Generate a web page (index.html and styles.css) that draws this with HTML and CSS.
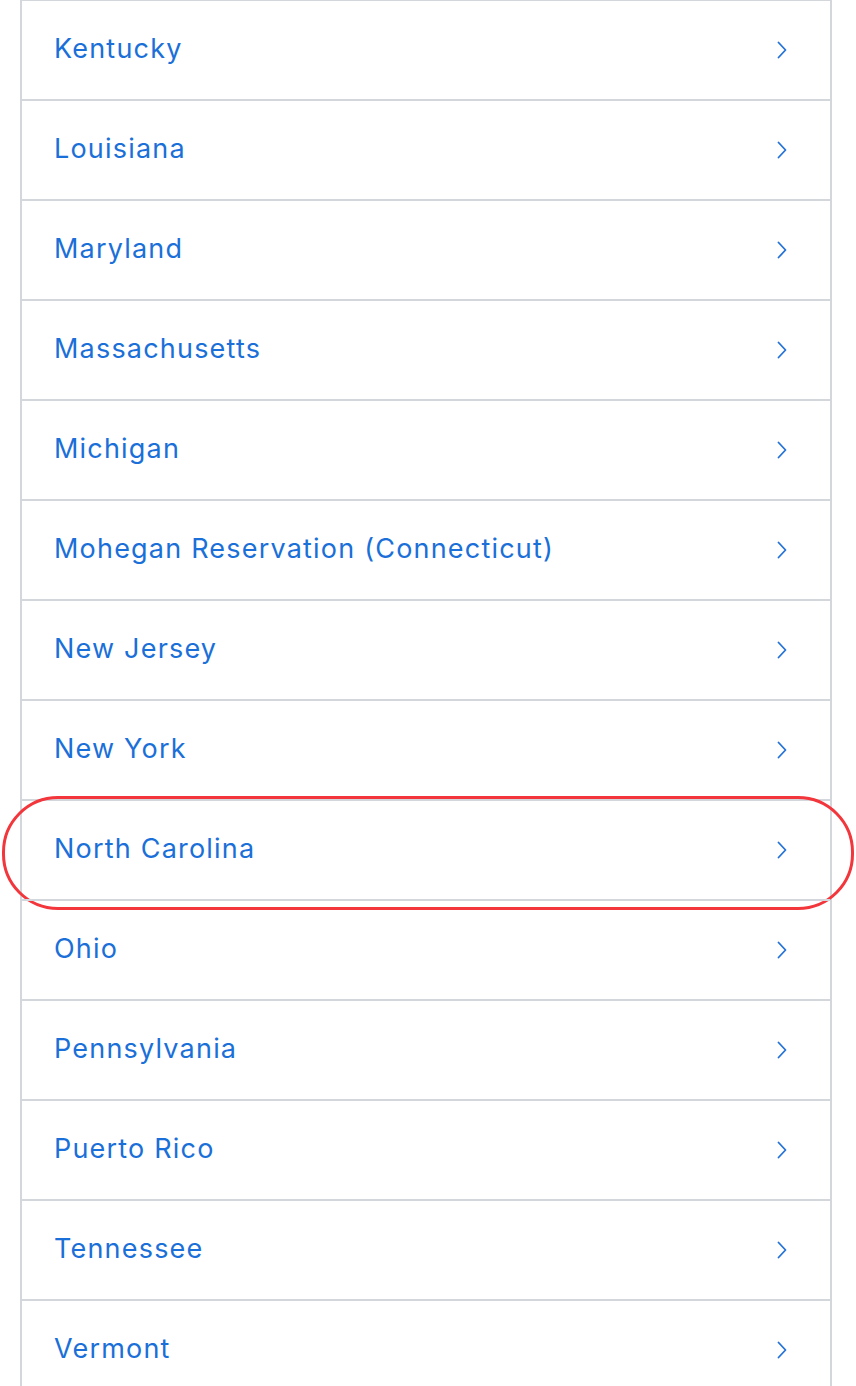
FILE: index.html
```html
<!DOCTYPE html>
<html lang="en">
<head>
<meta charset="utf-8">
<title>States</title>
<link rel="stylesheet" href="styles.css">
</head>
<body>
<div class="page">
  <ul class="list">
    <li class="row"><a class="link" href="#"><span class="name">Kentucky</span><svg class="chev" viewBox="0 0 10 18"><path d="M1.5 1.5 L8.5 9 L1.5 16.5"/></svg></a></li>
    <li class="row"><a class="link" href="#"><span class="name">Louisiana</span><svg class="chev" viewBox="0 0 10 18"><path d="M1.5 1.5 L8.5 9 L1.5 16.5"/></svg></a></li>
    <li class="row"><a class="link" href="#"><span class="name">Maryland</span><svg class="chev" viewBox="0 0 10 18"><path d="M1.5 1.5 L8.5 9 L1.5 16.5"/></svg></a></li>
    <li class="row"><a class="link" href="#"><span class="name">Massachusetts</span><svg class="chev" viewBox="0 0 10 18"><path d="M1.5 1.5 L8.5 9 L1.5 16.5"/></svg></a></li>
    <li class="row"><a class="link" href="#"><span class="name">Michigan</span><svg class="chev" viewBox="0 0 10 18"><path d="M1.5 1.5 L8.5 9 L1.5 16.5"/></svg></a></li>
    <li class="row"><a class="link" href="#"><span class="name">Mohegan Reservation (Connecticut)</span><svg class="chev" viewBox="0 0 10 18"><path d="M1.5 1.5 L8.5 9 L1.5 16.5"/></svg></a></li>
    <li class="row"><a class="link" href="#"><span class="name">New Jersey</span><svg class="chev" viewBox="0 0 10 18"><path d="M1.5 1.5 L8.5 9 L1.5 16.5"/></svg></a></li>
    <li class="row"><a class="link" href="#"><span class="name">New York</span><svg class="chev" viewBox="0 0 10 18"><path d="M1.5 1.5 L8.5 9 L1.5 16.5"/></svg></a></li>
    <li class="row highlighted"><a class="link" href="#"><span class="name">North Carolina</span><svg class="chev" viewBox="0 0 10 18"><path d="M1.5 1.5 L8.5 9 L1.5 16.5"/></svg></a><span class="ring"></span></li>
    <li class="row"><a class="link" href="#"><span class="name">Ohio</span><svg class="chev" viewBox="0 0 10 18"><path d="M1.5 1.5 L8.5 9 L1.5 16.5"/></svg></a></li>
    <li class="row"><a class="link" href="#"><span class="name">Pennsylvania</span><svg class="chev" viewBox="0 0 10 18"><path d="M1.5 1.5 L8.5 9 L1.5 16.5"/></svg></a></li>
    <li class="row"><a class="link" href="#"><span class="name">Puerto Rico</span><svg class="chev" viewBox="0 0 10 18"><path d="M1.5 1.5 L8.5 9 L1.5 16.5"/></svg></a></li>
    <li class="row"><a class="link" href="#"><span class="name">Tennessee</span><svg class="chev" viewBox="0 0 10 18"><path d="M1.5 1.5 L8.5 9 L1.5 16.5"/></svg></a></li>
    <li class="row"><a class="link" href="#"><span class="name">Vermont</span><svg class="chev" viewBox="0 0 10 18"><path d="M1.5 1.5 L8.5 9 L1.5 16.5"/></svg></a></li>
  </ul>
</div>
</body>
</html>
```

FILE: styles.css
```css
html, body {
  margin: 0;
  padding: 0;
  background: #ffffff;
}

body {
  font-family: "Inter", "Open Sans", "Liberation Sans", sans-serif;
  overflow: hidden;
}

.page {
  padding: 0 24px 0 20px;
  margin-top: -1px;
}

.list {
  list-style: none;
  margin: 0;
  padding: 0;
  border-left: 2px solid #d3d7db;
  border-right: 2px solid #d3d7db;
}

.row {
  position: relative;
  border-top: 2px solid #d3d7db;
  height: 98px;
}

.link {
  display: flex;
  align-items: center;
  justify-content: space-between;
  box-sizing: border-box;
  height: 100%;
  padding: 0 43px 3px 32px;
  text-decoration: none;
  color: #1a6fd8;
}

.name {
  font-size: 27px;
  line-height: 1;
  letter-spacing: 1.2px;
}

.chev {
  width: 10px;
  height: 18px;
  margin-top: 3px;
  fill: none;
  stroke: #2472d8;
  stroke-width: 1.8;
  stroke-linecap: round;
  stroke-linejoin: round;
}

.ring {
  position: absolute;
  left: -20px;
  right: -24px;
  top: -5px;
  bottom: -11px;
  border: 3px solid #f2363b;
  border-radius: 56px;
  pointer-events: none;
}
```
